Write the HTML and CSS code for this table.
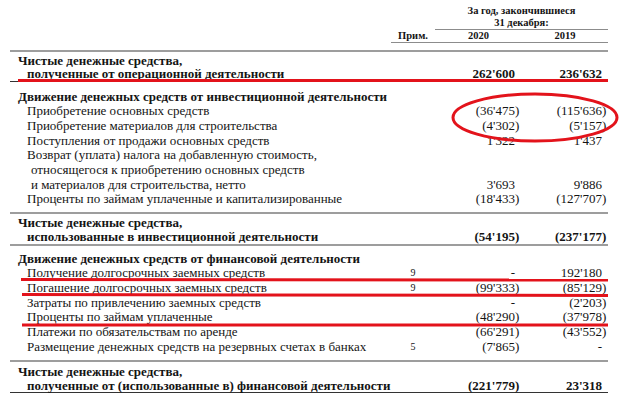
FILE: index.html
```html
<!DOCTYPE html>
<html lang="ru">
<head>
<meta charset="utf-8">
<title>Движение денежных средств</title>
<link rel="stylesheet" href="styles.css">
</head>
<body>
<div class="sheet">
  <div class="grid head1">
    <div></div><div></div>
    <div class="period">За год, закончившиеся<br>31 декабря:</div>
  </div>
  <div class="grid head2">
    <div></div><div class="hc">Прим.</div><div class="hc">2020</div><div class="hc">2019</div>
  </div>
  <div class="rule r-top"></div>

  <div class="grid total t1">
    <div class="lbl">Чистые денежные средства,<span class="sub">полученные от операционной деятельности</span></div>
    <div></div>
    <div class="num a">262'600</div>
    <div class="num b">236'632</div>
  </div>

  <div class="section s-inv">
    <div class="grid sechead"><div class="lbl">Движение денежных средств от инвестиционной деятельности</div></div>
    <div class="grid item"><div class="lbl">Приобретение основных средств</div><div></div><div class="num a">(36'475<span class="cp">)</span></div><div class="num b">(115'636<span class="cp">)</span></div></div>
    <div class="grid item"><div class="lbl">Приобретение материалов для строительства</div><div></div><div class="num a">(4'302<span class="cp">)</span></div><div class="num b">(5'157<span class="cp">)</span></div></div>
    <div class="grid item"><div class="lbl">Поступления от продажи основных средств</div><div></div><div class="num a">1'322</div><div class="num b">1'437</div></div>
    <div class="grid item"><div class="lbl">Возврат (уплата) налога на добавленную стоимость,<span class="cont">относящегося к приобретению основных средств</span><span class="cont">и материалов для строительства, нетто</span></div><div></div><div class="num a">3'693</div><div class="num b">9'886</div></div>
    <div class="grid item"><div class="lbl">Проценты по займам уплаченные и капитализированные</div><div></div><div class="num a">(18'433<span class="cp">)</span></div><div class="num b">(127'707<span class="cp">)</span></div></div>
  </div>
  <div class="rule r-inv"></div>

  <div class="grid total t2">
    <div class="lbl">Чистые денежные средства,<span class="sub">использованные в инвестиционной деятельности</span></div>
    <div></div>
    <div class="num a">(54'195<span class="cp">)</span></div>
    <div class="num b">(237'177<span class="cp">)</span></div>
  </div>
  <div class="rule"></div>

  <div class="section s-fin">
    <div class="grid sechead"><div class="lbl">Движение денежных средств от финансовой деятельности</div></div>
    <div class="grid item"><div class="lbl">Получение долгосрочных заемных средств</div><div class="note">9</div><div class="num a">-</div><div class="num b">192'180</div></div>
    <div class="grid item"><div class="lbl">Погашение долгосрочных заемных средств</div><div class="note">9</div><div class="num a">(99'333<span class="cp">)</span></div><div class="num b">(85'129<span class="cp">)</span></div></div>
    <div class="grid item"><div class="lbl">Затраты по привлечению заемных средств</div><div></div><div class="num a">-</div><div class="num b">(2'203<span class="cp">)</span></div></div>
    <div class="grid item"><div class="lbl">Проценты по займам уплаченные</div><div></div><div class="num a">(48'290<span class="cp">)</span></div><div class="num b">(37'978<span class="cp">)</span></div></div>
    <div class="grid item"><div class="lbl">Платежи по обязательствам по аренде</div><div></div><div class="num a">(66'291<span class="cp">)</span></div><div class="num b">(43'552<span class="cp">)</span></div></div>
    <div class="grid item"><div class="lbl">Размещение денежных средств на резервных счетах в банках</div><div class="note">5</div><div class="num a">(7'865<span class="cp">)</span></div><div class="num b">-</div></div>
  </div>
  <div class="rule r-fin"></div>

  <div class="grid total t3">
    <div class="lbl">Чистые денежные средства,<span class="sub">полученные от (использованные в) финансовой деятельности</span></div>
    <div></div>
    <div class="num a">(221'779<span class="cp">)</span></div>
    <div class="num b">23'318</div>
  </div>

  <svg class="marks" width="624" height="393" viewBox="0 0 624 393" aria-hidden="true">
    <line x1="18" y1="80.5" x2="608" y2="80.5"/>
    <line x1="21" y1="279.5" x2="608" y2="280"/>
    <line x1="22" y1="294.5" x2="608" y2="295.5"/>
    <line x1="22" y1="325" x2="608" y2="325"/>
    <ellipse cx="535" cy="117.5" rx="82" ry="23.5"/>
  </svg>
</div>
</body>
</html>
```

FILE: styles.css
```css
html, body {
  margin: 0;
  padding: 0;
  background: #ffffff;
}

body {
  font-family: "Liberation Serif", "Times New Roman", serif;
  color: #141414;
  font-size: 13px;
  overflow: hidden;
}

.sheet {
  position: relative;
  width: 598px;
  padding: 5px 16px 0 10px;
}

.grid {
  display: grid;
  grid-template-columns: 381px 44px 87px 86px;
  align-items: end;
}

.head1,
.head2 {
  font-weight: bold;
  font-size: 10.5px;
  line-height: 12px;
}

.period {
  grid-column: 3 / 5;
  text-align: center;
  border-bottom: 1px solid #8c8c8c;
}

.head2 .hc {
  text-align: center;
  border-bottom: 1px solid #8c8c8c;
}

.rule {
  height: 2px;
  background: #9d9d9d;
}

.r-top { margin-top: 7px; }
.r-inv { margin-top: 5px; }
.r-fin { margin-top: 5.5px; }

.total {
  font-weight: bold;
  line-height: 13.5px;
}

.t1 {
  padding-top: 1.5px;
  border-bottom: 1px solid #333333;
}

.t2 {
  line-height: 14px;
  padding-top: 2px;
}

.t3 {
  padding-top: 3.5px;
  border-bottom: 1px solid #333333;
}

.lbl {
  padding-left: 8px;
  white-space: nowrap;
}

.sub {
  display: block;
  padding-left: 9px;
}

.section {
  line-height: 14.67px;
}

.s-inv { padding-top: 8px; }
.s-fin { padding-top: 5.7px; }

.sechead .lbl {
  font-weight: bold;
  grid-column: 1 / 5;
}

.item .lbl {
  padding-left: 17px;
}

.cont {
  display: block;
  padding-left: 4px;
}

.note {
  text-align: center;
  font-size: 10px;
}

.num {
  text-align: right;
  white-space: nowrap;
}

.num.a { padding-right: 7px; }
.num.b { padding-right: 6px; }

.cp {
  margin-right: -4.3px;
}

.marks {
  position: absolute;
  left: 0;
  top: 0;
  pointer-events: none;
}

.marks line,
.marks ellipse {
  fill: none;
  stroke: #e3131b;
  stroke-width: 3;
}
```
